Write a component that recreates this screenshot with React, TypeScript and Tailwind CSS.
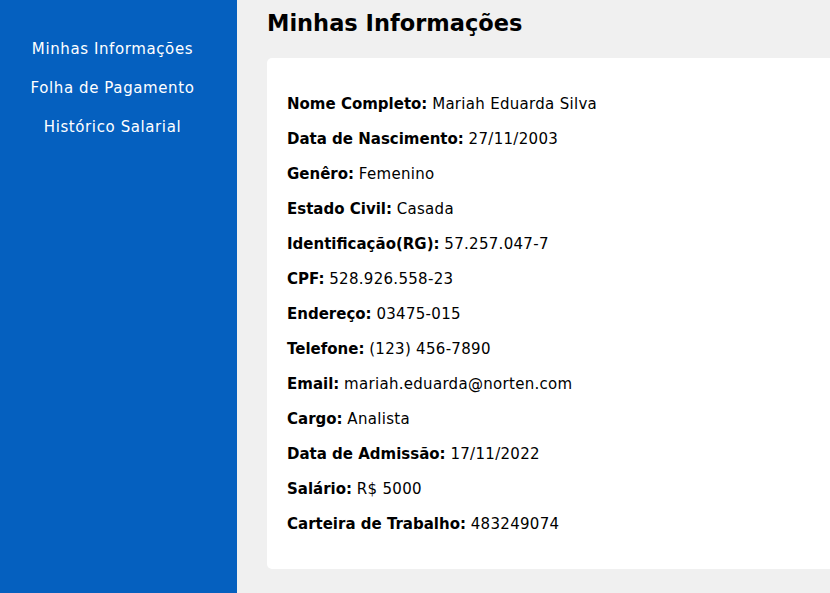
import React from "react";

const links = ["Minhas Informações", "Folha de Pagamento", "Histórico Salarial"];

const info: [string, string][] = [
  ["Nome Completo:", "Mariah Eduarda Silva"],
  ["Data de Nascimento:", "27/11/2003"],
  ["Genêro:", "Femenino"],
  ["Estado Civil:", "Casada"],
  ["Identificação(RG):", "57.257.047-7"],
  ["CPF:", "528.926.558-23"],
  ["Endereço:", "03475-015"],
  ["Telefone:", "(123) 456-7890"],
  ["Email:", "mariah.eduarda@norten.com"],
  ["Cargo:", "Analista"],
  ["Data de Admissão:", "17/11/2022"],
  ["Salário:", "R$ 5000"],
  ["Carteira de Trabalho:", "483249074"],
];

export default function App() {
  return (
    <div className="flex h-[593px] w-[830px] overflow-hidden bg-[#f0f0f0] font-['DejaVu_Sans',sans-serif] text-black">
      <aside className="flex w-[237px] shrink-0 flex-col items-center gap-[19px] bg-[#0560bf] pr-[12px] pt-[39px]">
        {links.map((l) => (
          <a key={l} className="text-[15px] font-normal leading-[20px] tracking-[0.6px] text-white">
            {l}
          </a>
        ))}
      </aside>
      <main className="flex-1 pl-[30px]">
        <h1 className="pt-[8px] text-[22.5px] font-bold leading-[30px]">Minhas Informações</h1>
        <div className="mt-[20px] w-[620px] rounded-[5px] bg-white px-[20px] pb-[35px] pt-[36px]">
          <div className="flex flex-col gap-[15px]">
            {info.map(([k, v]) => (
              <p key={k} className="text-[15px] leading-[20px]">
                <b className="font-bold">{k}</b> <span className="tracking-[0.3px]">{v}</span>
              </p>
            ))}
          </div>
        </div>
      </main>
    </div>
  );
}
